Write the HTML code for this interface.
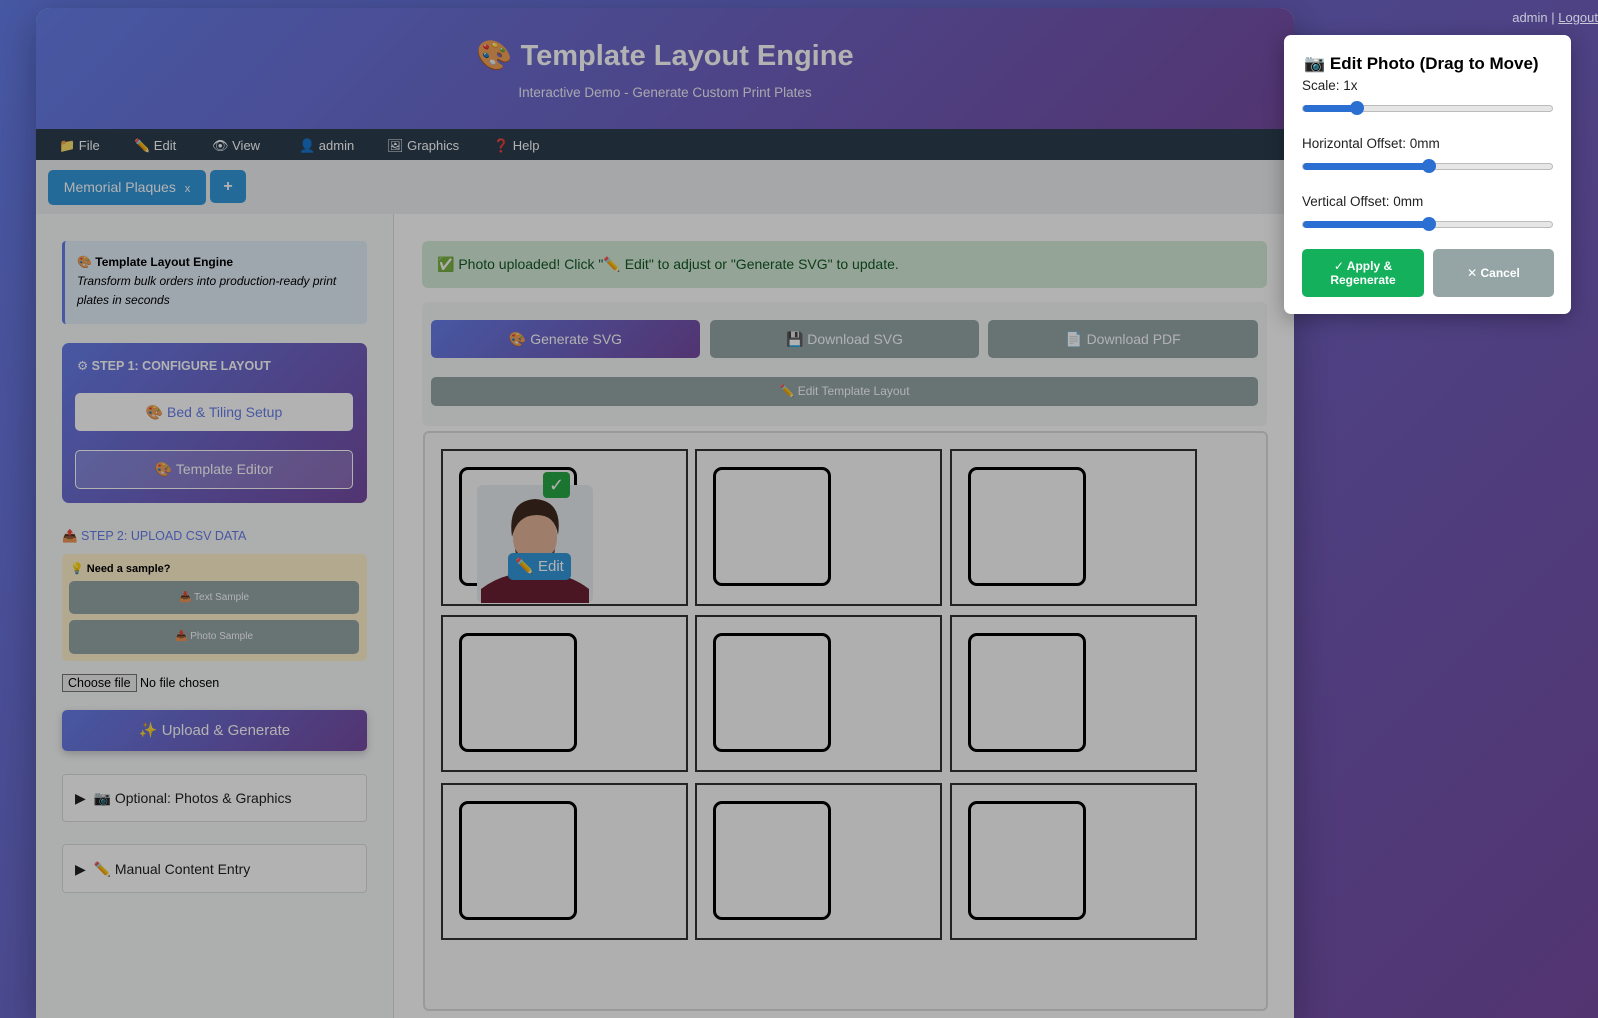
<!DOCTYPE html>
<html><head><meta charset="utf-8"><style>
*{box-sizing:border-box;margin:0;padding:0}
html{width:1598px;height:1018px;overflow:hidden}
body{width:1598px;height:1018px;overflow:hidden;position:relative;font-family:"Liberation Sans","DejaVu Sans",sans-serif;background:linear-gradient(135deg,#667eea 0%,#764ba2 100%)}
.a{position:absolute}
.card{left:36px;top:8px;width:1258px;height:1010px;background:#fff;border-radius:14px 14px 0 0;overflow:hidden;box-shadow:0 10px 40px rgba(0,0,0,.3)}
.hdr{left:0;top:0;width:1258px;height:121px;background:linear-gradient(135deg,#667eea,#764ba2);color:#fff;text-align:center}
.hdr h1{position:absolute;left:0;right:0;top:31px;font-size:29px;font-weight:bold}
.hdr p{position:absolute;left:0;right:0;top:77px;font-size:13.5px;opacity:.9}
.nav{left:0;top:121px;width:1258px;height:31px;background:#2c3e50;color:#fff;font-size:13px}
.nav span{position:absolute;top:9px}
.tabs{left:0;top:152px;width:1258px;height:54px;background:#ecf0f1}
.side{left:0;top:206px;width:358px;height:830px;background:#f8f9fa;border-right:1px solid #ddd}
.main{left:358px;top:206px;width:900px;height:830px;background:#fff}
.btn{position:absolute;border-radius:5px;color:#fff;text-align:center;font-size:13px}
.cell{position:absolute;width:247px;height:157px;border:2px solid #333;background:#fbfbfb}
.cell i{position:absolute;left:16px;top:16px;width:118px;height:119px;border:3px solid #000;border-radius:9px}
.ov{position:fixed;left:0;top:0;width:1598px;height:1018px;background:rgba(0,0,0,.3)}
.sl{position:absolute;left:18px;width:251px;height:7px;border-radius:4px;background:#e6e6e6;border:1px solid #bbb}
.sl b{position:absolute;left:0;top:-1px;height:7px;border-radius:4px;background:#2a6fd1}
.sl u{position:absolute;top:-5px;width:14px;height:14px;border-radius:50%;background:#2a6fd1}
.lab{position:absolute;left:18px;font-size:13.5px;color:#222}
</style></head><body>
<div class="a card">
 <div class="a hdr"><h1>🎨 Template Layout Engine</h1><p>Interactive Demo - Generate Custom Print Plates</p></div>
 <div class="a nav"><span style="left:23px">📁 File</span><span style="left:98px">✏️ Edit</span><span style="left:176px">👁 View</span><span style="left:263px">👤 admin</span><span style="left:351px">🖼 Graphics</span><span style="left:457px">❓ Help</span></div>
 <div class="a tabs">
  <div class="btn" style="left:12px;top:10px;width:158px;height:35px;background:#3498db;line-height:35px;font-size:14px">Memorial Plaques <span style="font-size:11px;margin-left:5px">x</span></div>
  <div class="btn" style="left:174px;top:10px;width:36px;height:33px;background:#3498db;line-height:33px;font-size:16px;font-weight:bold">+</div>
 </div>
 <div class="a side">
  <div class="a" style="left:26px;top:27px;width:305px;height:83px;background:#e3eefa;border-left:3px solid #667eea;border-radius:4px;padding:12px 12px;font-size:12px;line-height:19px;color:#000"><b>🎨 Template Layout Engine</b><br><i>Transform bulk orders into production-ready print plates in seconds</i></div>
  <div class="a" style="left:26px;top:129px;width:305px;height:160px;background:linear-gradient(135deg,#667eea,#764ba2);border-radius:7px">
   <div class="a" style="left:15px;top:15px;color:#fff;font-size:12.5px;font-weight:bold">⚙ STEP 1: CONFIGURE LAYOUT</div>
   <div class="btn" style="left:13px;top:50px;width:278px;height:38px;background:#fff;color:#667eea;line-height:38px;font-size:14px">🎨 Bed &amp; Tiling Setup</div>
   <div class="btn" style="left:13px;top:107px;width:278px;height:39px;background:rgba(255,255,255,.18);border:1px solid #fff;line-height:37px;font-size:14px">🎨 Template Editor</div>
  </div>
  <div class="a" style="left:26px;top:315px;color:#667eea;font-size:12.5px">📤 STEP 2: UPLOAD CSV DATA</div>
  <div class="a" style="left:26px;top:340px;width:305px;height:107px;background:#fff3cd;border-radius:5px">
   <div class="a" style="left:8px;top:8px;font-size:11px;font-weight:bold">💡 Need a sample?</div>
   <div class="btn" style="left:7px;top:27px;width:290px;height:33px;background:#95a5a6;line-height:33px;font-size:10px">📥 Text Sample</div>
   <div class="btn" style="left:7px;top:66px;width:290px;height:34px;background:#95a5a6;line-height:34px;font-size:10px">📥 Photo Sample</div>
  </div>
  <div class="a" style="left:26px;top:462px;font-size:12.5px"><span style="border:1px solid #767676;background:#efefef;padding:1px 5px">Choose file</span> No file chosen</div>
  <div class="btn" style="left:26px;top:496px;width:305px;height:41px;background:linear-gradient(135deg,#667eea,#764ba2);line-height:41px;font-size:15px;box-shadow:0 3px 8px rgba(0,0,0,.2)">✨ Upload &amp; Generate</div>
  <div class="a" style="left:26px;top:560px;width:305px;height:48px;border:1px solid #ddd;border-radius:4px;background:#fff;padding:15px 12px;font-size:14px;color:#222">▶&nbsp; 📷 Optional: Photos &amp; Graphics</div>
  <div class="a" style="left:26px;top:630px;width:305px;height:49px;border:1px solid #ddd;border-radius:4px;background:#fff;padding:16px 12px;font-size:14px;color:#222">▶&nbsp; ✏️ Manual Content Entry</div>
 </div>
 <div class="a main">
  <div class="a" style="left:28px;top:27px;width:845px;height:47px;background:#d4edda;border-radius:6px;padding:15px 15px;font-size:14px;color:#155724">✅ Photo uploaded! Click "✏️ Edit" to adjust or "Generate SVG" to update.</div>
  <div class="a" style="left:28px;top:88px;width:845px;height:124px;background:#f5f6f7;border-radius:6px">
   <div class="btn" style="left:9px;top:18px;width:269px;height:38px;background:linear-gradient(135deg,#667eea,#764ba2);line-height:38px;font-size:14px">🎨 Generate SVG</div>
   <div class="btn" style="left:288px;top:18px;width:269px;height:38px;background:#95a5a6;line-height:38px;font-size:14px">💾 Download SVG</div>
   <div class="btn" style="left:566px;top:18px;width:270px;height:38px;background:#95a5a6;line-height:38px;font-size:14px">📄 Download PDF</div>
   <div class="btn" style="left:9px;top:75px;width:827px;height:29px;background:#95a5a6;line-height:29px;font-size:12px">✏️ Edit Template Layout</div>
  </div>
  <div class="a" style="left:29px;top:217px;width:845px;height:580px;background:#fbfbfb;border:2px solid #ddd;border-radius:6px"></div>
  <div class="cell" style="left:47px;top:235px"><i></i></div>
  <div class="cell" style="left:301px;top:235px"><i></i></div>
  <div class="cell" style="left:556px;top:235px"><i></i></div>
  <div class="cell" style="left:47px;top:401px"><i></i></div>
  <div class="cell" style="left:301px;top:401px"><i></i></div>
  <div class="cell" style="left:556px;top:401px"><i></i></div>
  <div class="cell" style="left:47px;top:569px"><i></i></div>
  <div class="cell" style="left:301px;top:569px"><i></i></div>
  <div class="cell" style="left:556px;top:569px"><i></i></div>
  <svg class="a" style="left:83px;top:271px" width="116" height="118" viewBox="0 0 116 118">
   <rect width="116" height="118" rx="6" fill="#e9ecef"/>
   <path d="M4 118 V104 Q22 90 45 88 L70 88 Q94 90 112 104 V118Z" fill="#6b2033"/>
   <rect x="46" y="70" width="24" height="22" fill="#c99279"/>
   <ellipse cx="58" cy="52" rx="22" ry="29" fill="#e3b49a"/>
   <path d="M35 52 Q30 16 58 14 Q86 16 81 50 Q78 30 60 30 Q40 30 35 52Z" fill="#3e2a20"/>
   <path d="M38 64 Q58 94 78 64 Q76 82 58 86 Q40 82 38 64Z" fill="#5a3a2a"/>
  </svg>
  <div class="btn" style="left:149px;top:258px;width:27px;height:26px;background:#28a745;border-radius:4px;font-size:18px;line-height:26px">✓</div>
  <div class="btn" style="left:114px;top:339px;width:63px;height:27px;background:#3498db;border-radius:5px;font-size:15px;line-height:27px">✏️ Edit</div>
 </div>
</div>
<div class="ov"></div>
<div class="a" style="right:0;top:10px;font-size:13px;color:#c8c8d8">admin | <u>Logout</u></div>
<div class="a" style="left:1284px;top:35px;width:287px;height:279px;background:#fff;border-radius:7px;box-shadow:0 5px 20px rgba(0,0,0,.3)">
 <div class="a" style="left:20px;top:19px;font-size:17px;font-weight:bold;color:#000">📷 Edit Photo (Drag to Move)</div>
 <div class="lab" style="top:43px">Scale: 1x</div>
 <div class="sl" style="top:70px"><b style="width:56px"></b><u style="left:47px"></u></div>
 <div class="lab" style="top:101px">Horizontal Offset: 0mm</div>
 <div class="sl" style="top:128px"><b style="width:128px"></b><u style="left:119px"></u></div>
 <div class="lab" style="top:159px">Vertical Offset: 0mm</div>
 <div class="sl" style="top:186px"><b style="width:128px"></b><u style="left:119px"></u></div>
 <div class="btn" style="left:18px;top:214px;width:122px;height:48px;background:#14b05c;font-weight:bold;font-size:12px;padding-top:10px;line-height:14px">✓ Apply &amp;<br>Regenerate</div>
 <div class="btn" style="left:149px;top:214px;width:121px;height:48px;background:#95a5a6;font-weight:bold;font-size:12px;line-height:48px">✕ Cancel</div>
</div>
</body></html>
